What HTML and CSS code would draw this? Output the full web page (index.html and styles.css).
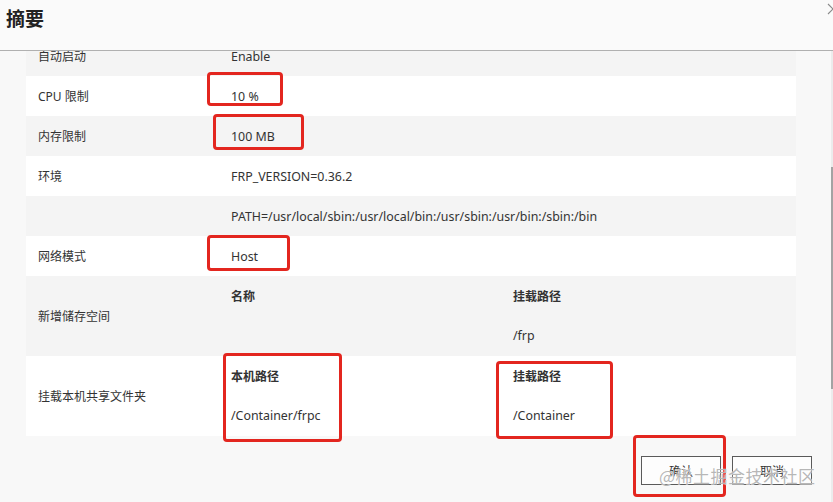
FILE: index.html
```html
<!DOCTYPE html>
<html lang="zh-CN">
<head>
<meta charset="utf-8">
<title>摘要</title>
<link rel="stylesheet" href="styles.css">
</head>
<body>
<div class="dialog">
  <header class="header">
    <h1 class="title">摘要</h1>
    <svg class="close" width="12" height="12" viewBox="0 0 12 12"><path d="M1 1 L11 11 M11 1 L1 11" stroke="#8a8a8a" stroke-width="1.1" fill="none"/></svg>
  </header>
  <div class="main">
    <div class="content">
      <div class="table">
        <div class="row alt">
          <div class="cell label">自动启动</div>
          <div class="cell value">Enable</div>
        </div>
        <div class="row">
          <div class="cell label">CPU 限制</div>
          <div class="cell value">10 %</div>
        </div>
        <div class="row alt">
          <div class="cell label">内存限制</div>
          <div class="cell value">100 MB</div>
        </div>
        <div class="row">
          <div class="cell label">环境</div>
          <div class="cell value">FRP_VERSION=0.36.2</div>
        </div>
        <div class="row alt">
          <div class="cell label"></div>
          <div class="cell value wide">PATH=/usr/local/sbin:/usr/local/bin:/usr/sbin:/usr/bin:/sbin:/bin</div>
        </div>
        <div class="row">
          <div class="cell label">网络模式</div>
          <div class="cell value">Host</div>
        </div>
        <div class="row alt">
          <div class="cell label">新增储存空间</div>
          <div class="cell stack">
            <div class="line head">名称</div>
            <div class="line"></div>
          </div>
          <div class="cell stack">
            <div class="line head">挂载路径</div>
            <div class="line">/frp</div>
          </div>
        </div>
        <div class="row">
          <div class="cell label">挂载本机共享文件夹</div>
          <div class="cell stack">
            <div class="line head">本机路径</div>
            <div class="line">/Container/frpc</div>
          </div>
          <div class="cell stack">
            <div class="line head">挂载路径</div>
            <div class="line">/Container</div>
          </div>
        </div>
      </div>
      <div class="footer">
        <button class="btn">确认</button>
        <button class="btn">取消</button>
      </div>
    </div>
    <div class="scrollbar"><div class="thumb"></div></div>
  </div>

  <div class="mark m1"></div>
  <div class="mark m2"></div>
  <div class="mark m3"></div>
  <div class="mark m4"></div>
  <div class="mark m5"></div>
  <div class="mark m6"></div>
  <div class="watermark">@稀土掘金技术社区</div>
</div>
</body>
</html>
```

FILE: styles.css
```css
* { box-sizing: border-box; }
html, body {
  margin: 0;
  padding: 0;
  width: 833px;
  height: 502px;
  overflow: hidden;
  background: #f8f8f8;
}
body {
  font-family: "Noto Sans", "Noto Sans CJK SC", sans-serif;
  font-size: 12px;
  color: #333;
}
.dialog {
  position: relative;
  width: 833px;
  height: 502px;
  display: flex;
  flex-direction: column;
  overflow: hidden;
}
.header {
  height: 51px;
  flex: none;
  background: #fafafa;
  border-bottom: 1px solid #b0b0b0;
  display: flex;
  justify-content: space-between;
  align-items: flex-start;
  padding: 7px 0 0 6px;
}
.title {
  margin: 0;
  font-family: "Noto Sans CJK SC", sans-serif;
  font-size: 19px;
  line-height: 22px;
  font-weight: 700;
  color: #222;
}
.close {
  margin-top: -4px;
  margin-right: -6px;
}
.main {
  flex: 1;
  display: flex;
  min-height: 0;
}
.content {
  flex: 1;
  overflow: hidden;
  display: flex;
  flex-direction: column;
}
.table {
  margin: -15px 35px 0 26px;
  display: flex;
  flex-direction: column;
}
.row {
  display: grid;
  grid-template-columns: 193px 282px 1fr;
  align-items: center;
  min-height: 40px;
  background: #ffffff;
}
.row.alt { background: #f4f4f4; }
.cell {
  padding-left: 12px;
  white-space: nowrap;
}
.value, .line {
  font-size: 12.4px;
}
.value.wide { grid-column: 2 / 4; }
.stack {
  display: flex;
  flex-direction: column;
}
.line {
  height: 40px;
  line-height: 40px;
}
.line.head {
  font-size: 12px;
  font-weight: 700;
  font-family: "Noto Sans CJK SC", sans-serif;
}
.footer {
  display: flex;
  justify-content: flex-end;
  gap: 11px;
  padding: 20px 19px 0 0;
}
.btn {
  width: 80px;
  height: 29px;
  border: 1px solid #5a5a5a;
  background: #fdfdfd;
  font-family: "Noto Sans CJK SC", sans-serif;
  font-size: 12px;
  color: #333;
  padding: 0;
}
.scrollbar {
  width: 2px;
  flex: none;
  background: #ececec;
  display: flex;
  flex-direction: column;
}
.thumb {
  margin-top: 116px;
  height: 222px;
  background: #a3a3a3;
}
.mark {
  position: absolute;
  border: 3px solid #e3261f;
  border-radius: 4px;
}
.m1 { left: 207px; top: 72px; width: 76px; height: 34px; }
.m2 { left: 213px; top: 114px; width: 91px; height: 36px; }
.m3 { left: 207px; top: 235px; width: 83px; height: 36px; }
.m4 { left: 223px; top: 353px; width: 119px; height: 89px; }
.m5 { left: 496px; top: 361px; width: 117px; height: 78px; }
.m6 { left: 633px; top: 435px; width: 93px; height: 62px; }
.watermark {
  position: absolute;
  left: 659px;
  top: 464px;
  font-family: "Noto Sans CJK SC", sans-serif;
  font-size: 17px;
  line-height: 24px;
  color: rgba(120, 120, 120, 0.55);
  text-shadow: 0 0 1px #fff, 0 0 1px #fff;
  letter-spacing: 0.5px;
  white-space: nowrap;
}
```
